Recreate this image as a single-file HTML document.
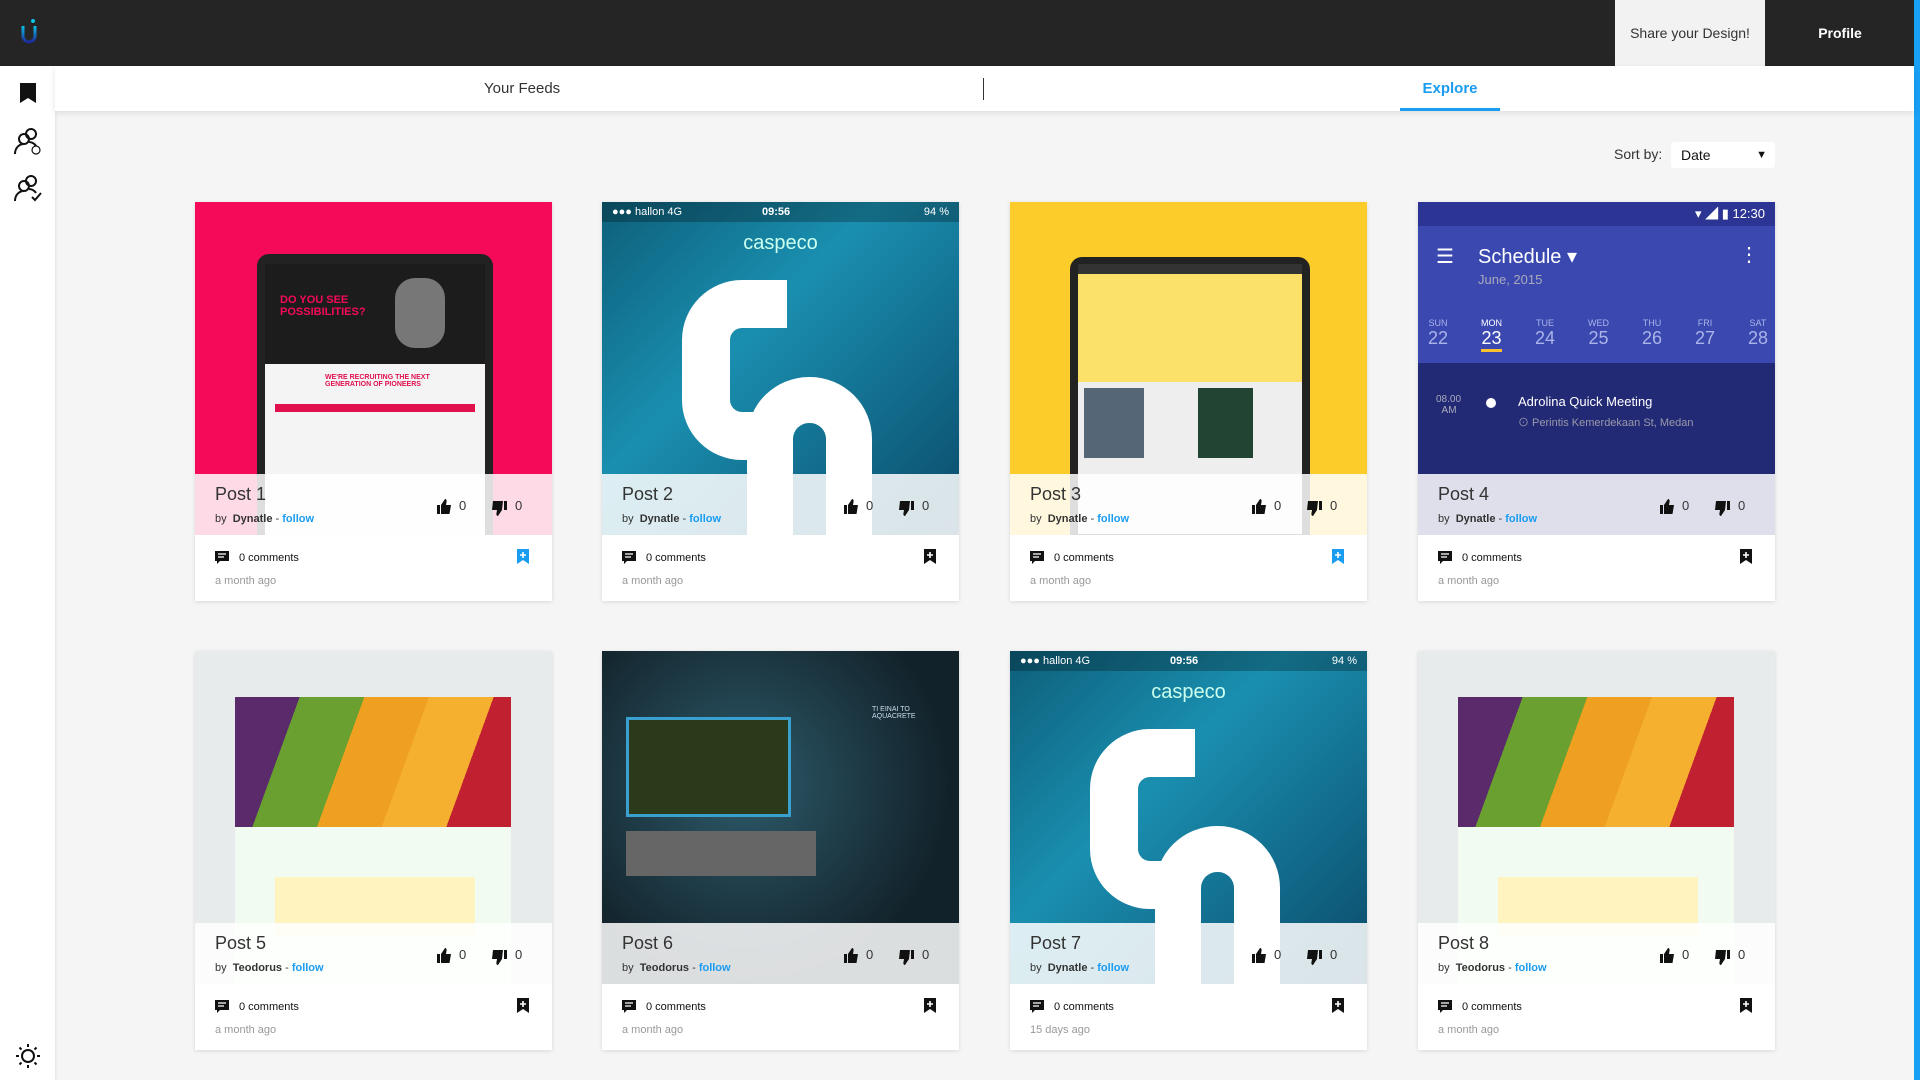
<!DOCTYPE html>
<html><head><meta charset="utf-8"><style>
*{box-sizing:border-box;margin:0;padding:0}
body{width:1920px;height:1080px;overflow:hidden;background:#f5f5f5;font-family:"Liberation Sans","Noto Sans CJK SC",sans-serif;position:relative}
.hdr{position:absolute;left:0;top:0;width:1920px;height:66px;background:#252525}
.share{position:absolute;left:1615px;top:0;width:150px;height:66px;background:#f2f2f2;color:#333;font-size:14px;line-height:66px;text-align:center}
.prof{position:absolute;left:1765px;top:0;width:150px;height:66px;color:#fff;font-size:14px;font-weight:bold;line-height:66px;text-align:center}
.stripe{position:absolute;left:1914px;top:0;width:6px;height:1080px;background:#18a0f5}
.side{position:absolute;left:0;top:66px;width:55px;height:1014px;background:#fff;box-shadow:1px 0 3px rgba(0,0,0,.08)}
.tabs{position:absolute;left:55px;top:66px;width:1859px;height:45px;background:#fff;box-shadow:0 2px 6px rgba(0,0,0,.1)}
.tab{position:absolute;top:0;height:45px;line-height:45px;font-size:15px;color:#333}
.card{position:absolute;width:357px;height:399px;background:#fff;box-shadow:0 1px 4px rgba(0,0,0,.12)}
.img{position:absolute;left:0;top:0;width:357px;height:333px;overflow:hidden}
.ov{position:absolute;left:0;top:272px;width:357px;height:61px;background:rgba(255,255,255,.85)}
.title{position:absolute;left:20px;top:282px;font-size:18px;color:#333}
.by{position:absolute;left:20px;top:311px;font-size:11px;color:#333}
.by b{font-weight:bold}.by a{color:#1a9cf0;font-weight:bold}
.lk{position:absolute;top:296px;font-size:13px;color:#333}
.cm{position:absolute;left:20px;top:350px;font-size:11px;color:#111}
.ago{position:absolute;left:20px;top:373px;font-size:11px;color:#999}
.bm{position:absolute;left:322px;top:347px}
</style></head><body>
<div class="hdr">
<svg style="position:absolute;left:20px;top:18px" width="18" height="28" viewBox="0 0 18 28"><defs><linearGradient id="lg" x1="0" y1="0" x2="0" y2="1"><stop offset="0" stop-color="#0cc4e8"/><stop offset="1" stop-color="#1a2a9a"/></linearGradient></defs><circle cx="13" cy="3" r="2" fill="#0cc4e8"/><path d="M3 8 V18 a6 6 0 0 0 12 0 V8" stroke="url(#lg)" stroke-width="3" fill="none"/></svg>
<div class="share">Share your Design!</div><div class="prof">Profile</div></div>
<div class="stripe"></div>
<div class="side">
<svg style="position:absolute;left:19px;top:16px" width="18" height="22" viewBox="0 0 18 22"><path d="M1 1h16v20l-8-5-8 5z" fill="#111"/></svg>
<svg style="position:absolute;left:13px;top:60px" width="30" height="30" viewBox="0 0 30 30" fill="none" stroke="#111" stroke-width="2"><circle cx="18" cy="8" r="5"/><circle cx="11" cy="13" r="5"/><path d="M2 28c0-6 4-10 9-10M16 16c3 0 6 2 7 4"/><circle cx="23" cy="24" r="4" stroke-width="1.2"/></svg>
<svg style="position:absolute;left:13px;top:107px" width="30" height="30" viewBox="0 0 30 30" fill="none" stroke="#111" stroke-width="2"><circle cx="18" cy="8" r="5"/><circle cx="11" cy="13" r="5"/><path d="M2 28c0-6 4-10 9-10M16 16c3 0 6 2 7 4M19 24l3 3 6-7"/></svg>
<svg style="position:absolute;left:15px;top:977px" width="26" height="26" viewBox="0 0 26 26" fill="none" stroke="#111" stroke-width="2"><circle cx="13" cy="13" r="6"/><path d="M13 1v3M13 22v3M1 13h3M22 13h3M4.5 4.5l2 2M19.5 19.5l2 2M4.5 21.5l2-2M19.5 6.5l2-2"/></svg>
</div>
<div class="tabs">
<div class="tab" style="left:429px">Your Feeds</div>
<div style="position:absolute;left:928px;top:12px;width:1px;height:22px;background:#333"></div>
<div class="tab" style="left:1345px;width:100px;text-align:center;color:#1a9cf0;font-weight:bold;border-bottom:3px solid #1a9cf0">Explore</div>
</div>
<div style="position:absolute;left:1614px;top:146px;font-size:14px;color:#333">Sort by:</div>
<div style="position:absolute;left:1671px;top:142px;width:104px;height:26px;background:#fff;border-radius:3px;font-size:14px;line-height:26px;padding-left:10px;color:#111">Date<span style="position:absolute;right:8px;top:0;font-size:11px">&#9660;</span></div>

<div id="g"></div>
<script>
const imgs={
pink:'<div style="position:absolute;inset:0;background:#f50a5a"></div><div style="position:absolute;left:62px;top:52px;width:236px;height:290px;background:#222;border-radius:12px"></div><div style="position:absolute;left:70px;top:62px;width:220px;height:100px;background:#1c1c1c"><div style="position:absolute;left:15px;top:30px;color:#f50a5a;font-weight:bold;font-size:11px">DO YOU SEE<br>POSSIBILITIES?</div><div style="position:absolute;left:130px;top:14px;width:50px;height:70px;border-radius:20px;background:#777"></div></div><div style="position:absolute;left:70px;top:162px;width:220px;height:180px;background:#f4f4f4"><div style="position:absolute;left:60px;top:10px;font-size:7px;color:#e0104e;font-weight:bold">WE\'RE RECRUITING THE NEXT<br>GENERATION OF PIONEERS</div><div style="position:absolute;left:10px;top:40px;width:200px;height:8px;background:#e0104e"></div></div>',
cas:'<div style="position:absolute;inset:0;background:linear-gradient(135deg,#0d5f7a,#1a8fb0 40%,#0b4a6a)"></div><div style="position:absolute;left:0;top:0;width:100%;height:20px;background:rgba(0,0,0,.25);color:#fff;font-size:11px;line-height:20px;padding-left:10px">●●● hallon 4G<span style="position:absolute;left:160px;font-weight:bold">09:56</span><span style="position:absolute;right:10px">94 %</span></div><div style="position:absolute;left:0;width:100%;top:30px;text-align:center;color:#cfe;font-size:20px">caspeco</div><div style="position:absolute;left:80px;top:78px;width:105px;height:180px;border:48px solid #fff;border-right:none;border-radius:60px 0 0 60px"></div><div style="position:absolute;left:145px;top:175px;width:125px;height:200px;border:46px solid #fff;border-radius:62px 62px 0 0;border-bottom:none"></div>',
yel:'<div style="position:absolute;inset:0;background:#fccd2a"></div><div style="position:absolute;left:60px;top:55px;width:240px;height:290px;background:#222;border-radius:12px"></div><div style="position:absolute;left:68px;top:62px;width:224px;height:270px;background:#fbe06a"><div style="position:absolute;left:0;top:0;width:100%;height:10px;background:#333"></div><div style="position:absolute;left:0;top:118px;width:100%;height:152px;background:#eee"></div><div style="position:absolute;left:6px;top:124px;width:60px;height:70px;background:#567"></div><div style="position:absolute;left:120px;top:124px;width:55px;height:70px;background:#243"></div></div>',
sch:'<div style="position:absolute;inset:0;background:#232a75"></div><div style="position:absolute;left:0;top:0;width:100%;height:24px;background:#2c3593;color:#fff;font-size:13px;line-height:24px;text-align:right;padding-right:10px">▾ ◢ ▮ 12:30</div><div style="position:absolute;left:0;top:24px;width:100%;height:137px;background:#3a48b0;color:#fff"><div style="position:absolute;left:18px;top:18px;font-size:20px">☰</div><div style="position:absolute;left:60px;top:18px;font-size:20px">Schedule ▾</div><div style="position:absolute;left:60px;top:46px;font-size:13px;color:#aab">June, 2015</div><div style="position:absolute;right:16px;top:16px;font-size:20px">⋮</div><div style="position:absolute;left:10px;top:92px;width:340px;display:flex;justify-content:space-between;font-size:18px;color:#aab4e8;text-align:center"><span><small style="font-size:9px;display:block">SUN</small>22</span><span style="color:#fff;border-bottom:3px solid #fbc02d"><small style="font-size:9px;display:block">MON</small>23</span><span><small style="font-size:9px;display:block">TUE</small>24</span><span><small style="font-size:9px;display:block">WED</small>25</span><span><small style="font-size:9px;display:block">THU</small>26</span><span><small style="font-size:9px;display:block">FRI</small>27</span><span><small style="font-size:9px;display:block">SAT</small>28</span></div></div><div style="position:absolute;left:18px;top:192px;color:#aab;font-size:10px">08.00<br>&nbsp;&nbsp;AM</div><div style="position:absolute;left:68px;top:196px;width:10px;height:10px;border-radius:50%;background:#fff"></div><div style="position:absolute;left:100px;top:192px;color:#fff;font-size:13px">Adrolina Quick Meeting</div><div style="position:absolute;left:100px;top:212px;color:#99a;font-size:11px">⊙ Perintis Kemerdekaan St, Medan</div>',
fr:'<div style="position:absolute;inset:0;background:#e8ebec"></div><div style="position:absolute;left:40px;top:46px;width:276px;height:130px;background:linear-gradient(110deg,#5a2a6a 0 20%,#6aa030 20% 40%,#f0a020 40% 60%,#f5b030 60% 80%,#c02030 80%)"></div><div style="position:absolute;left:40px;top:176px;width:276px;height:160px;background:#f2fbf2"><div style="position:absolute;left:40px;top:50px;width:200px;height:60px;background:#fff3c0"></div></div>',
aq:'<div style="position:absolute;inset:0;background:radial-gradient(circle at 40% 40%,#2d5a6a,#12222a 70%)"></div><div style="position:absolute;left:24px;top:66px;width:165px;height:100px;border:3px solid #3aa0d0;background:#2a3a1a"></div><div style="position:absolute;left:24px;top:180px;width:190px;height:45px;background:#666"></div><div style="position:absolute;left:270px;top:55px;width:80px;height:150px;color:#cde;font-size:7px">ΤΙ ΕΙΝΑΙ ΤΟ AQUACRETE</div>'
};
const cards=[['pink','Post 1','Dynatle',1,'a month ago'],['cas','Post 2','Dynatle',0,'a month ago'],['yel','Post 3','Dynatle',1,'a month ago'],['sch','Post 4','Dynatle',0,'a month ago'],['fr','Post 5','Teodorus',0,'a month ago'],['aq','Post 6','Teodorus',0,'a month ago'],['cas','Post 7','Dynatle',0,'15 days ago'],['fr','Post 8','Teodorus',0,'a month ago']];
const xs=[195,602,1010,1418],ys=[202,651];
let h='';
cards.forEach((c,i)=>{const x=xs[i%4],y=ys[Math.floor(i/4)];const col=c[3]?'#1a9cf0':'#111';
h+=`<div class="card" style="left:${x}px;top:${y}px"><div class="img">${imgs[c[0]]}</div><div class="ov"></div>
<div class="title">${c[1]}</div><div class="by">by&nbsp; <b>${c[2]}</b> - <a>follow</a></div>
<svg class="lk" style="left:241px;top:297px" width="16" height="15" viewBox="0 0 16 15"><path d="M1 6h3v9H1zM5 6l4-6c1 0 2 1 1.5 3L10 6h5l-1.5 9H5z" fill="#111"/></svg><div class="lk" style="left:264px">0</div>
<svg class="lk" style="left:297px;top:299px" width="16" height="15" viewBox="0 0 16 15"><path d="M12 0h3v9h-3zM11 0L7 0 1 0 0 9h5l-.5 3c-.5 2 .5 3 1.5 3l4-6z" fill="#111"/></svg><div class="lk" style="left:320px">0</div>
<svg style="position:absolute;left:20px;top:349px" width="14" height="14" viewBox="0 0 14 14"><path d="M0 0h14v10H5l-3 3v-3H0z" fill="#111"/><path d="M3 3h8M3 6h6" stroke="#fff" stroke-width="1.2"/></svg>
<div class="cm" style="left:44px">0 comments</div><div class="ago">${c[4]}</div>
<svg class="bm" width="12" height="15" viewBox="0 0 12 15"><path d="M0 0h12v15l-6-4-6 4z" fill="${col}"/><path d="M6 3v6M3 6h6" stroke="#fff" stroke-width="1.6"/></svg></div>`;});
document.getElementById('g').innerHTML=h;
</script>
</body></html>
